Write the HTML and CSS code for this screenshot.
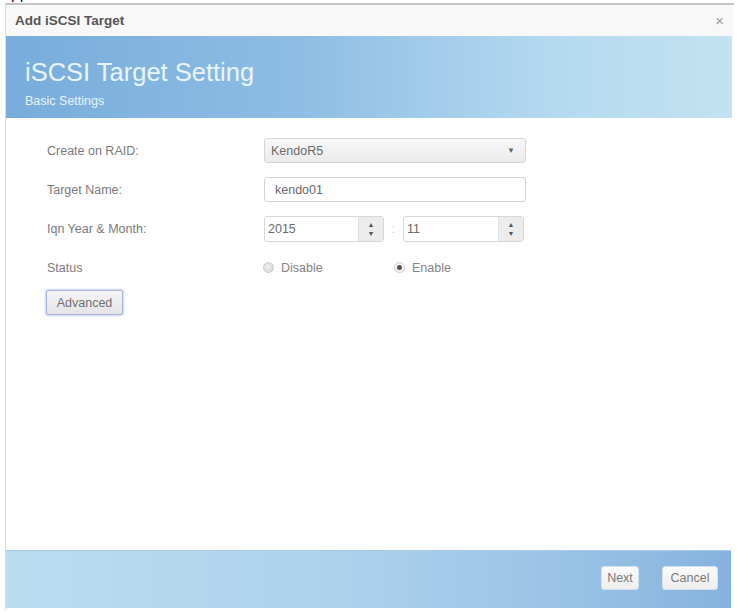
FILE: index.html
```html
<!DOCTYPE html>
<html>
<head>
<meta charset="utf-8">
<link rel="stylesheet" href="styles.css">
</head>
<body>
<div class="scrap"><span>appears</span></div>
<div class="dialog">
  <div class="titlebar">
    <span class="title">Add iSCSI Target</span>
    <span class="close">×</span>
  </div>
  <div class="banner">
    <div class="banner-title">iSCSI Target Setting</div>
    <div class="banner-sub">Basic Settings</div>
  </div>
  <div class="content">
    <div class="form">
      <div class="label">Create on RAID:</div>
      <div class="select"><span>KendoR5</span><span class="caret">▼</span></div>
      <div class="label">Target Name:</div>
      <div class="textbox">kendo01</div>
      <div class="label">Iqn Year &amp; Month:</div>
      <div class="numbers">
        <div class="numeric"><span class="num-val">2015</span><span class="spin"><span class="up">▲</span><span class="down">▼</span></span></div>
        <span class="colon">:</span>
        <div class="numeric month"><span class="num-val">11</span><span class="spin"><span class="up">▲</span><span class="down">▼</span></span></div>
      </div>
      <div class="label">Status</div>
      <div class="radios">
        <label class="radio first"><span class="dot"></span>Disable</label>
        <label class="radio"><span class="dot on"></span>Enable</label>
      </div>
    </div>
    <button class="advanced">Advanced</button>
  </div>
  <div class="footer">
    <button class="fbtn next">Next</button>
    <button class="fbtn cancel">Cancel</button>
  </div>
</div>
</body>
</html>
```
FILE: styles.css
```css
html, body {
  margin: 0;
  padding: 0;
  background: #ffffff;
  height: 612px;
  overflow: hidden;
  font-family: "Liberation Sans", Arial, sans-serif;
}

.scrap {
  height: 3px;
  overflow: hidden;
  padding-left: 2px;
}
.scrap span {
  display: block;
  font-size: 16px;
  line-height: 16px;
  margin-top: -14px;
  color: #111;
}

.dialog {
  margin-left: 5px;
  width: 728px;
  height: 605px;
  border-top: 2px solid #c4c4c4;
  border-left: 1px solid #dedede;
  display: flex;
  flex-direction: column;
}

.titlebar {
  height: 31px;
  flex: none;
  display: flex;
  align-items: center;
  justify-content: space-between;
  padding: 0 10px 0 9px;
  background: #f8f8f8;
}
.title {
  font-weight: bold;
  font-size: 13.5px;
  color: #555;
}
.close {
  font-size: 15px;
  color: #9a9a9a;
}

.banner {
  height: 82px;
  flex: none;
  box-sizing: border-box;
  margin-right: 2px;
  padding: 24px 0 0 19px;
  background: linear-gradient(to right, #78acdb 0%, #8dbde4 40%, #b4d9ef 75%, #c3e2f1 100%);
}
.banner-title {
  font-size: 25.5px;
  line-height: 25px;
  color: #e9f5fd;
}
.banner-sub {
  margin-top: 10px;
  font-size: 12.5px;
  line-height: 13px;
  color: #eaf5fc;
}

.content {
  height: 432px;
  flex: none;
  box-sizing: border-box;
  padding: 20px 0 0 41px;
}

.form {
  display: grid;
  grid-template-columns: 217px 262px;
  grid-auto-rows: 25px;
  row-gap: 14px;
  align-items: center;
}
.label {
  font-size: 12.5px;
  color: #7a7a7a;
}

.select {
  height: 25px;
  box-sizing: border-box;
  border: 1px solid #d6d6d6;
  border-radius: 3px;
  background: linear-gradient(#f8f8f8, #ebebeb);
  display: flex;
  align-items: center;
  justify-content: space-between;
  padding: 0 10px 0 6px;
  font-size: 12.5px;
  color: #6a6a6a;
}
.caret {
  font-size: 8px;
  color: #666;
}

.textbox {
  height: 25px;
  box-sizing: border-box;
  border: 1px solid #d3d3d3;
  border-radius: 3px;
  background: #fff;
  display: flex;
  align-items: center;
  padding-left: 10px;
  font-size: 12.5px;
  color: #6a6a6a;
}

.numbers {
  display: flex;
  align-items: center;
  height: 26px;
}
.numeric {
  width: 120px;
  height: 26px;
  box-sizing: border-box;
  border: 1px solid #d6d6d6;
  border-radius: 3px;
  background: #fff;
  display: flex;
  align-items: stretch;
  font-size: 12.5px;
  color: #6a6a6a;
}
.numeric.month {
  width: 121px;
}
.num-val {
  flex: 1;
  display: flex;
  align-items: center;
  padding-left: 3px;
}
.spin {
  width: 24px;
  background: #ececec;
  border-left: 1px solid #e0e0e0;
  display: flex;
  flex-direction: column;
  align-items: center;
  justify-content: center;
  font-size: 7px;
  line-height: 9px;
  color: #555;
}
.colon {
  width: 19px;
  text-align: center;
  font-size: 12px;
  color: #c2c2c2;
}

.radios {
  display: flex;
  align-items: center;
}
.radio {
  display: flex;
  align-items: center;
  font-size: 12.5px;
  color: #858585;
}
.radio.first {
  width: 131px;
  margin-left: -1px;
}
.dot {
  width: 11px;
  height: 11px;
  box-sizing: border-box;
  border-radius: 50%;
  border: 1px solid #c9c9c9;
  background: radial-gradient(circle at 45% 40%, #f0f0f0, #d4d4d4);
  margin-right: 7px;
  display: flex;
  align-items: center;
  justify-content: center;
}
.dot.on {
  background: #f4f4f4;
  border-color: #cfcfcf;
}
.dot.on::after {
  content: "";
  width: 5px;
  height: 5px;
  border-radius: 50%;
  background: #555;
}

.advanced {
  margin: 10px 0 0 -1px;
  width: 77px;
  height: 25px;
  box-sizing: border-box;
  border: 1px solid #a9b5d8;
  border-radius: 2px;
  box-shadow: 0 0 2px 1px rgba(160, 178, 232, 0.55);
  background: linear-gradient(#f5f5f7, #e4e4e8);
  font-family: "Liberation Sans", Arial, sans-serif;
  font-size: 12.5px;
  color: #6e6e6e;
  padding: 0;
}

.footer {
  height: 58px;
  flex: none;
  box-sizing: border-box;
  margin-right: 3px;
  border-top: 1px solid #a9c8e3;
  background: linear-gradient(to right, #bcdcf0 0%, #add2ec 45%, #97c1e5 80%, #85b2de 100%);
  display: flex;
  align-items: center;
  justify-content: flex-end;
  padding: 0 13px 3px 0;
  gap: 23px;
}
.fbtn {
  height: 24px;
  box-sizing: border-box;
  border: 1px solid #d4e2ee;
  border-radius: 3px;
  background: linear-gradient(#fafafa, #eeeeee);
  font-family: "Liberation Sans", Arial, sans-serif;
  font-size: 12.5px;
  color: #7a7a7a;
  padding: 0;
}
.next {
  width: 38px;
}
.cancel {
  width: 56px;
}
```
